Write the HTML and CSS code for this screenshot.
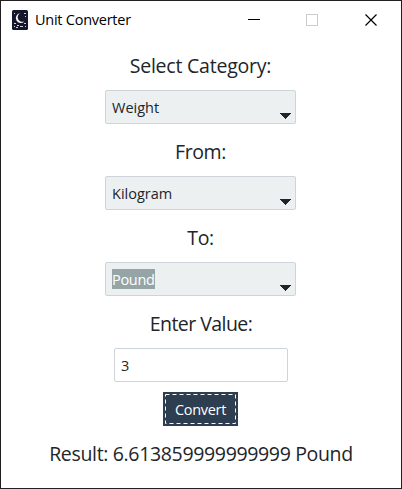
FILE: index.html
```
<!DOCTYPE html>
<html lang="en">
<head>
<meta charset="utf-8">
<title>Unit Converter</title>
<link rel="stylesheet" href="styles.css">
</head>
<body>
<div class="window">
  <header class="titlebar">
    <svg class="logo" width="16" height="20" viewBox="0 0 16 20">
      <rect width="16" height="20" rx="1.5" fill="#15182d"/>
      <path d="M8 3.3A4.9 4.9 0 1 0 12.500 11.2A4.500 4.500 0 0 1 8 3.3Z" fill="#f4f5fa"/>
      <path d="M2 3.500h1M12 3.500h2M13 6.500h1M2 13.500h2M12 13.500h2M2 16.500h1M5 15.500h2M8 16.500h3M13 16.500h1M4 17.500h2" stroke="#d0d2dc" stroke-width="1"/>
    </svg>
    <span class="title">Unit Converter</span>
    <svg class="controls" width="126" height="12" viewBox="0 0 126 12" shape-rendering="crispEdges">
      <path d="M0 5.5h12" stroke="#000"/>
      <rect x="58.5" y=".5" width="11" height="11" fill="none" stroke="#ccc"/>
      <path d="M117.5 .5l11 11M128.5 .5l-11 11" stroke="#000" stroke-width="1.2" shape-rendering="auto"/>
    </svg>
  </header>
  <main class="form">
    <div class="label category">Select Category:</div>
    <div class="combo"><span>Weight</span><svg class="arrow" width="11" height="6" viewBox="0 0 11 6"><path d="M0 0h11v1h-1v1h-1v1h-1v1h-1v1h-1v1h-1v-1h-1v-1h-1v-1h-1v-1h-1v-1h-1z"/></svg></div>
    <div class="label from">From:</div>
    <div class="combo"><span>Kilogram</span><svg class="arrow" width="11" height="6" viewBox="0 0 11 6"><path d="M0 0h11v1h-1v1h-1v1h-1v1h-1v1h-1v1h-1v-1h-1v-1h-1v-1h-1v-1h-1v-1h-1z"/></svg></div>
    <div class="label to">To:</div>
    <div class="combo"><span class="selected">Pound</span><svg class="arrow" width="11" height="6" viewBox="0 0 11 6"><path d="M0 0h11v1h-1v1h-1v1h-1v1h-1v1h-1v1h-1v-1h-1v-1h-1v-1h-1v-1h-1v-1h-1z"/></svg></div>
    <div class="label value">Enter Value:</div>
    <div class="entry">3</div>
    <div class="convert"><svg class="focus" width="71" height="30"><rect x=".5" y=".5" width="70" height="29"/></svg><span>Convert</span></div>
    <div class="label result">Result: 6.613859999999999 Pound</div>
  </main>
</div>
</body>
</html>
```

FILE: styles.css
```
* { box-sizing: border-box; }
body { margin: 0; }
.window {
  width: 402px;
  height: 489px;
  border: 1px solid #231f20;
  background: #fff;
  color: #212529;
  font-family: "Open Sans", "Noto Sans", sans-serif;
  font-size: 14.5px;
  white-space: nowrap;
}
.titlebar {
  display: flex;
  align-items: center;
  height: 37px;
  padding-left: 11px;
  color: #000;
}
.title { margin-left: 7px; letter-spacing: -.25px; }
.controls { margin-left: auto; margin-right: 27px; overflow: visible; }
.form { display: flex; flex-direction: column; align-items: center; padding: 13px 1px 0 0; }
.label { height: 30px; line-height: 30px; font-size: 19.5px; letter-spacing: -.4px; }
.category { letter-spacing: -.22px; }
.value { padding-left: 1px; letter-spacing: -.55px; }
.result { padding-left: 1px; letter-spacing: -.34px; }
.combo {
  display: flex;
  align-items: center;
  width: 191px;
  height: 34px;
  margin: 9px 0 13px;
  padding: 0 4px 0 6px;
  border: 1px solid #ced4da;
  border-radius: 2px;
  background: #ecf0f1;
  letter-spacing: 0;
}
.arrow { margin-left: auto; margin-top: 17px; fill: #212529; shape-rendering: crispEdges; }
.selected { height: 20px; line-height: 21px; background: #95a5a6; color: #fff; letter-spacing: -.3px; }
.entry {
  width: 174px;
  height: 34px;
  margin: 9px 0 0 1px;
  padding-left: 6px;
  border: 1px solid #ced4da;
  border-radius: 2px;
  line-height: 33px;
}
.convert {
  position: relative;
  display: flex;
  align-items: center;
  justify-content: center;
  width: 75px;
  height: 34px;
  margin: 10px 0 13px;
  background: #2c3e50;
  color: #fff;
  letter-spacing: -.3px;
}
.focus { position: absolute; left: 2px; top: 2px; fill: none; stroke: #fff; stroke-dasharray: 4 3; }
```
